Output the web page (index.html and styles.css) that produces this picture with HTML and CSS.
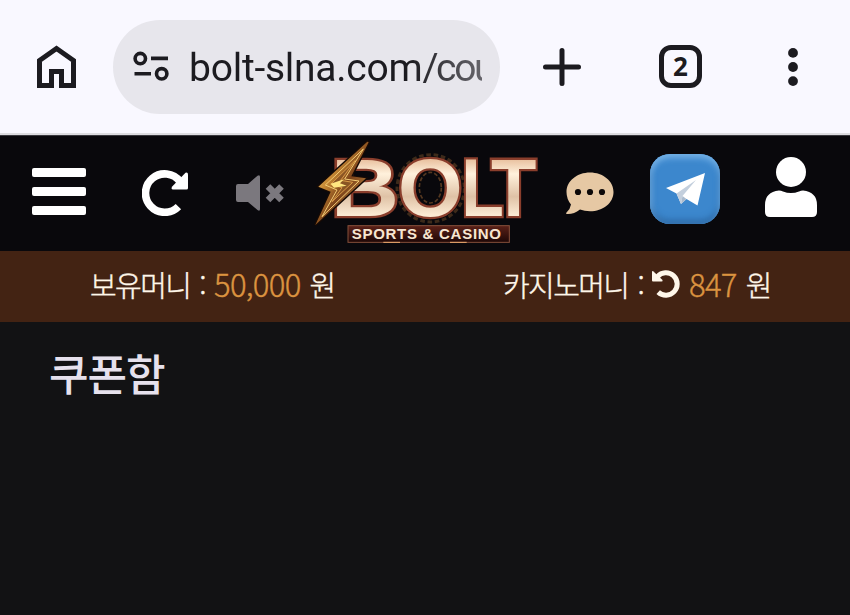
FILE: index.html
```html
<!DOCTYPE html>
<html lang="ko">
<head>
    <meta charset="UTF-8">
    <meta name="viewport" content="width=device-width, initial-scale=1.0">
    <title>쿠폰함</title>
    <link rel="stylesheet" href="styles.css">
</head>
<body>
    <div class="browser-bar">
        <svg class="home-icon" viewBox="0 0 39 43">
            <path d="M2.5 40.5V15.5L19.5 3.5L36.5 15.5V40.5H24.5V26.5H14.5V40.5Z" fill="none" stroke="#1c1b20" stroke-width="5"/>
        </svg>
        <div class="address">
            <svg class="site-icon" viewBox="0 0 36 31" fill="none" stroke="#1c1b20" stroke-width="3.6">
                <circle cx="7.3" cy="7.6" r="5.2"/>
                <path d="M18 7.4H35M1.5 22.8H18"/>
                <circle cx="28.7" cy="22.8" r="5.2"/>
            </svg>
            <span class="url">bolt-slna.com<span class="path">/cou</span></span>
        </div>
        <svg class="plus-icon" viewBox="0 0 38 38">
            <path d="M19 2.5V35.5M2.5 19H35.5" stroke="#1c1b20" stroke-width="5" stroke-linecap="round"/>
        </svg>
        <div class="tab-count">2</div>
        <svg class="more-icon" viewBox="0 0 10 38" fill="#1c1b20">
            <circle cx="5" cy="4.9" r="4.9"/>
            <circle cx="5" cy="19" r="4.9"/>
            <circle cx="5" cy="33.1" r="4.9"/>
        </svg>
    </div>

    <header class="site-header">
        <div class="menu-icon">
            <span></span>
            <span></span>
            <span></span>
        </div>
        <svg class="reload-icon" viewBox="0 0 46 46">
            <path d="M36.4 36.6A19.2 19.2 0 1 1 38 11.5" fill="none" stroke="#fff" stroke-width="7.6"/>
            <path d="M43.5 2.8Q46 2 46 4.6V18Q46 19.5 44.5 19.5H31Q28.5 19 30.2 16.5Z" fill="#fff"/>
        </svg>
        <svg class="mute-icon" viewBox="0 0 48 36" fill="#7b787e">
            <path d="M2 9H12L21.5 .8Q24 -.8 24 2V34Q24 36.8 21.5 35L12 27H2Q0 27 0 25V11Q0 9 2 9Z"/>
            <path d="M32 11.5L45.5 25M45.5 11.5L32 25" stroke="#7b787e" stroke-width="6.5"/>
        </svg>
        <svg class="logo" viewBox="30 0 690 348">
            <defs>
                <linearGradient id="cream" x1="0" y1="0" x2="0" y2="1">
                    <stop offset=".15" stop-color="#e3b48f"/>
                    <stop offset=".35" stop-color="#fff1dc"/>
                    <stop offset=".6" stop-color="#dfc2a6"/>
                    <stop offset=".8" stop-color="#fbead3"/>
                </linearGradient>
                <linearGradient id="gold" x1="0" y1="0" x2="1" y2="1">
                    <stop offset="0" stop-color="#fff0a8"/>
                    <stop offset=".35" stop-color="#c88a35"/>
                    <stop offset=".55" stop-color="#7c431a"/>
                    <stop offset="1" stop-color="#e3ad55"/>
                </linearGradient>
                <linearGradient id="plate" x1="0" y1="0" x2="0" y2="1">
                    <stop offset="0" stop-color="#5b2118"/>
                    <stop offset="1" stop-color="#1d0707"/>
                </linearGradient>
            </defs>
            <circle cx="392" cy="160" r="101" fill="none" stroke="#3d2a1a" stroke-width="9" stroke-dasharray="14 8"/>
            <g class="logo-name">
                <text x="92" y="243" textLength="205" lengthAdjust="spacingAndGlyphs">B</text>
                <text x="294" y="243" textLength="194" lengthAdjust="spacingAndGlyphs">O</text>
                <text x="484" y="243" textLength="128" lengthAdjust="spacingAndGlyphs">L</text>
                <text x="573" y="243" textLength="136" lengthAdjust="spacingAndGlyphs">T</text>
            </g>
            <ellipse cx="391" cy="158" rx="33" ry="46" fill="none" stroke="#553820" stroke-width="5" stroke-dasharray="12 6"/>
            <path d="M202 20L55 155L92 170L46 270L198 130L154 124L206 22Z" fill="url(#gold)" stroke="#160a05" stroke-width="8" paint-order="stroke"/>
            <path d="M190 42L76 150L111 165L66 245L177 138L134 132Z" fill="none" stroke="#f4cd75" stroke-width="3"/>
            <path d="M166 76L92 148L126 158L96 200L158 142L122 136Z" fill="#8a5524" stroke="#d99b48" stroke-width="3"/>
            <path d="M92 146L132 133L120 145L140 152L102 158Z" fill="#ffe680"/>
            <rect x="144" y="272" width="484" height="50" fill="url(#plate)" stroke="#86503b" stroke-width="3"/>
            <path d="M250 322H300M450 322H500" stroke="#f0ad70" stroke-width="3"/>
            <text class="logo-tag" x="155" y="312" textLength="448" lengthAdjust="spacing">SPORTS &amp; CASINO</text>
        </svg>
        <svg class="chat-icon" viewBox="0 0 48 43">
            <path d="M24 .5C37 .5 47.5 9 47.5 20S37 39.3 24 39.3Q18.5 39.3 14 37.5Q7.5 42.5 .8 42Q-.5 41.5 .5 40.5Q4.5 36.5 5 32.5Q.5 27 .5 20C.5 9 11 .5 24 .5Z" fill="#e6c8a4"/>
            <g fill="#0d0909">
                <circle cx="12" cy="20" r="3.1"/>
                <circle cx="24" cy="20" r="3.1"/>
                <circle cx="36" cy="20" r="3.1"/>
            </g>
        </svg>
        <div class="telegram">
            <svg viewBox="0 0 39 33">
                <path d="M0 15L39 0L31.5 32.5L20.5 26L15 31L10.5 20.5Z" fill="#fff"/>
                <path d="M10.5 20.5L30 7L16.5 23L15 31Z" fill="#c3cfdd"/>
                <path d="M16.5 23L15 31L20.5 26Z" fill="#a9bacd"/>
            </svg>
        </div>
        <svg class="user-icon" viewBox="0 0 52 60" fill="#fff">
            <circle cx="26" cy="15" r="15"/>
            <path d="M14 33.5Q16 33.5 18 34.5Q26 37.5 34 34.5Q36 33.5 38 33.5Q52 35 52 48V55Q52 60 47 60H5Q0 60 0 55V48Q0 35 14 33.5Z"/>
        </svg>
    </header>

    <div class="money-bar">
        <div class="money">
            <span class="label">보유머니</span>
            <span class="colon">:</span>
            <span class="amount">50,000</span>
            <span class="won">원</span>
        </div>
        <div class="money">
            <span class="label">카지노머니</span>
            <span class="colon">:</span>
            <svg class="undo-icon" viewBox="0 0 28 28">
                <path d="M5.5 6.7A11.2 11.2 0 1 1 6.2 22.1" fill="none" stroke="#fff7ea" stroke-width="5"/>
                <path d="M0 2Q0 .5 1.5 1.5L10.5 10Q11 11.5 9.5 11.5H1Q0 11.5 0 10.5Z" fill="#fff7ea"/>
            </svg>
            <span class="amount">847</span>
            <span class="won">원</span>
        </div>
    </div>

    <main>
        <h1>쿠폰함</h1>
    </main>
</body>
</html>
```
FILE: styles.css
```css
* {
    box-sizing: border-box;
}
body {
    margin: 0;
    height: 100vh;
    overflow: hidden;
    display: flex;
    flex-direction: column;
    background-color: #121214;
    font-family: "Noto Sans CJK KR", sans-serif;
}
svg {
    display: block;
    flex-shrink: 0;
}
.browser-bar {
    display: flex;
    align-items: center;
    height: 135px;
    flex-shrink: 0;
    padding-left: 37px;
    background-color: #f9f8ff;
    border-bottom: 2px solid #dddce0;
}
.home-icon {
    width: 39px;
    height: 43px;
}
.address {
    display: flex;
    align-items: center;
    width: 387px;
    height: 94px;
    margin-left: 37px;
    padding: 0 18px 0 20px;
    border-radius: 47px;
    background-color: #e7e6ec;
}
.site-icon {
    width: 36px;
    height: 31px;
}
.url {
    flex: 1;
    margin-left: 20px;
    padding-top: 3px;
    overflow: hidden;
    white-space: nowrap;
    font-family: Roboto, sans-serif;
    font-size: 39px;
    line-height: 50px;
    letter-spacing: -0.25px;
    color: transparent;
    background: linear-gradient(to right, #1c1b20 75%, #66656b);
    background-clip: text;
    -webkit-background-clip: text;
}
.path {
    letter-spacing: -2.4px;
}
.plus-icon {
    width: 38px;
    height: 38px;
    margin-left: 43px;
}
.tab-count {
    width: 43px;
    height: 43px;
    margin-left: 78px;
    border: 5px solid #1c1b20;
    border-radius: 12px;
    font: bold 26px/33px "Open Sans", sans-serif;
    text-align: center;
    color: #1c1b20;
}
.more-icon {
    width: 10px;
    height: 38px;
    margin-left: 86px;
}
.site-header {
    display: flex;
    align-items: flex-start;
    height: 116px;
    flex-shrink: 0;
    padding-left: 32px;
    background-color: #09080c;
    border-top: 1px solid #3a393e;
}
.menu-icon {
    display: flex;
    flex-direction: column;
    gap: 10px;
    width: 54px;
    margin-top: 32px;
}
.menu-icon span {
    height: 9px;
    border-radius: 2px;
    background-color: #fff;
}
.reload-icon {
    width: 46px;
    height: 46px;
    margin: 34px 0 0 56px;
}
.mute-icon {
    width: 48px;
    height: 36px;
    margin: 39px 0 0 48px;
}
.logo {
    width: 230px;
    height: 116px;
    margin: -1px 0 0 26px;
}
.logo text {
    font-family: "Liberation Sans", Arial, sans-serif;
    font-weight: bold;
}
.logo-name {
    font-size: 246px;
    fill: url(#cream);
    stroke: #8a3e2c;
    stroke-width: 14px;
    paint-order: stroke;
}
.logo-tag {
    font-size: 45px;
    fill: #f8e6d1;
}
.chat-icon {
    width: 48px;
    height: 43px;
    margin: 36px 0 0 26px;
}
.telegram {
    display: flex;
    align-items: center;
    justify-content: center;
    width: 70px;
    height: 70px;
    margin: 18px 0 0 36px;
    border-radius: 20px;
    background-color: #3c87cd;
    box-shadow: inset 0 4px 6px #74b1e6, inset 0 -4px 6px #2c68a5, inset 3px 0 5px #579bd9;
}
.telegram svg {
    width: 39px;
    height: 33px;
}
.user-icon {
    width: 52px;
    height: 60px;
    margin: 21px 0 0 45px;
}
.money-bar {
    display: grid;
    grid-template-columns: 413px 1fr;
    height: 71px;
    flex-shrink: 0;
    padding-left: 90px;
    background-color: #432313;
    color: #fff7ea;
}
.money {
    display: flex;
    align-items: center;
    padding-bottom: 5px;
    font-size: 29px;
    font-weight: 300;
    line-height: 66px;
    letter-spacing: -1.6px;
    white-space: nowrap;
    -webkit-text-stroke: 0.4px;
}
.colon {
    margin-left: 9px;
}
.amount {
    margin-left: 9px;
    font-size: 31px;
    letter-spacing: -0.7px;
    color: #dc9440;
}
.won {
    margin-left: 9px;
}
.undo-icon {
    width: 28px;
    height: 28px;
    margin-left: 9px;
}
main {
    padding: 20px 49px;
}
h1 {
    margin: 0;
    font-size: 43px;
    font-weight: 500;
    line-height: 60px;
    letter-spacing: -1px;
    color: #e6e1ed;
}
```
